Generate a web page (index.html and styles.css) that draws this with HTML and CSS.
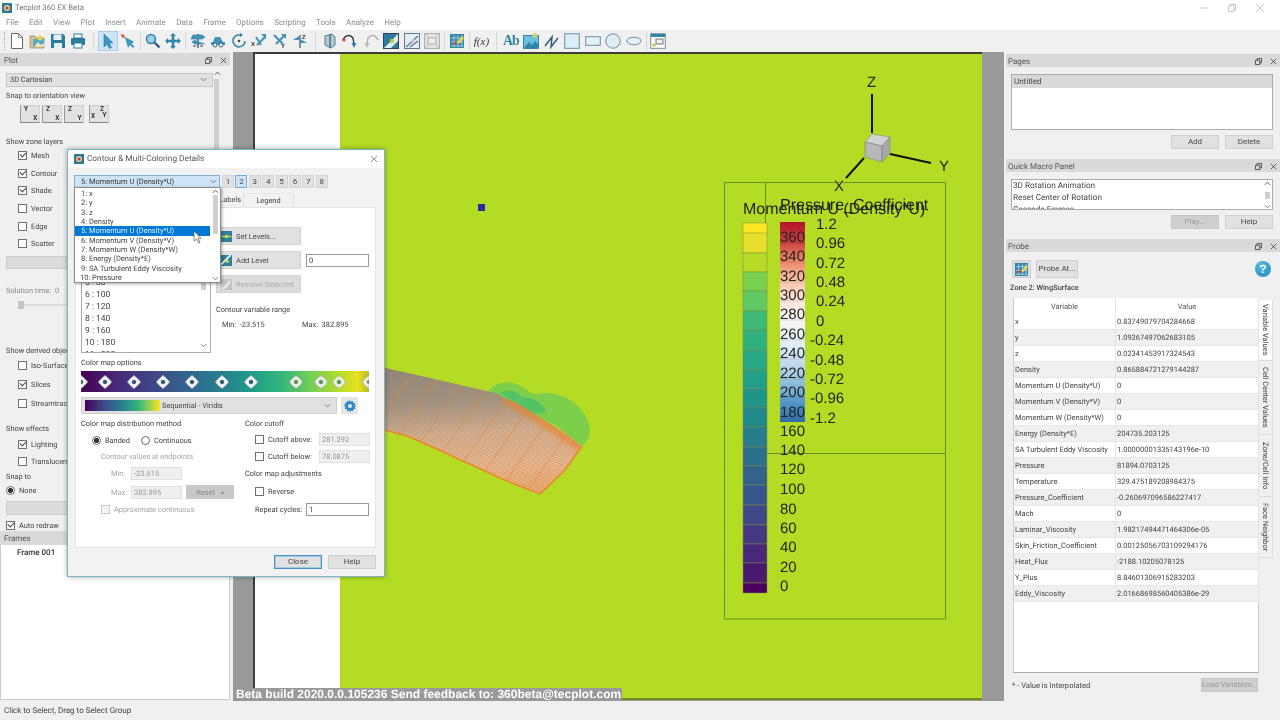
FILE: index.html
```html
<!DOCTYPE html>
<html lang="en">
<head>
<meta charset="utf-8">
<title>Tecplot 360 EX Beta</title>
<link rel="stylesheet" href="styles.css">
</head>
<body>
<svg class="defs" width="0" height="0" aria-hidden="true">
  <defs>
    <symbol id="i-probe" viewBox="0 0 16 16">
      <rect x="1" y="1" width="14" height="14" fill="#2f86a8"/>
      <path d="M2 5h12M2 9h12M2 13h12M5 2v12M9 2v12M13 2v12" stroke="#cfe6ef" stroke-width=".7"/>
      <path d="M8 9 13 3l2 2-5 6z" fill="#e6d257"/>
      <circle cx="6" cy="10" r="1.6" fill="#d8402f"/>
    </symbol>
    <symbol id="i-rot" viewBox="0 0 16 16">
      <path d="M8 1v14" stroke="#35607a" stroke-width="1.4"/>
      <path d="M1 6h11l3-2-3-2H3zM15 11H5L2 9l3-2" fill="#3f93b5" stroke="#2a7393" stroke-width=".6"/>
      <path d="M3 13h3M10 13h3" stroke="#444" stroke-width="1.2"/>
    </symbol>
    <symbol id="i-gear" viewBox="0 0 16 16">
      <path d="M8 1l1.2 2 2.2-.8.3 2.3 2.3.3-.8 2.2 2 1-2 1.2.8 2.2-2.3.3-.3 2.3-2.2-.8L8 15l-1.2-2-2.2.8-.3-2.3-2.3-.3.8-2.2-2-1.2 2-1-.8-2.2 2.3-.3.3-2.3 2.2.8z" fill="#2f86c4"/>
      <circle cx="8" cy="8" r="2.4" fill="#d7e8f4"/>
    </symbol>
  </defs>
</svg>

<div class="app">
  <header class="titlebar">
    <svg class="app-icon" viewBox="0 0 10 10"><rect width="10" height="10" fill="#2d7a95"/><circle cx="5" cy="5" r="3" fill="#e8c79a"/><circle cx="5" cy="5" r="1.5" fill="#c8402c"/></svg>
    <span class="title-text">Tecplot 360 EX Beta</span>
    <div class="winctl">
      <svg viewBox="0 0 10 10"><path d="M1 5h8"/></svg>
      <svg viewBox="0 0 10 10"><path d="M1.5 3h5.5v5.500H1.500zM3 3V1.500h5.500V7H7"/></svg>
      <svg viewBox="0 0 10 10"><path d="M1 1l8 8M9 1l-8 8"/></svg>
    </div>
  </header>
  <nav class="menubar">
    <span>File</span><span>Edit</span><span>View</span><span>Plot</span><span>Insert</span><span>Animate</span><span>Data</span><span>Frame</span><span>Options</span><span>Scripting</span><span>Tools</span><span>Analyze</span><span>Help</span>
  </nav>

  <div class="toolbar">
    <i class="grip"></i>
    <button class="tb"><svg viewBox="0 0 16 16"><path d="M2.500.5h7l4 4v11h-11z" fill="#fff" stroke="#666"/><path d="M9.500.5v4h4" fill="none" stroke="#888"/></svg></button>
    <button class="tb"><svg viewBox="0 0 16 16"><path d="M1 3h5l1 2h8v10H1z" fill="#d9c08c" stroke="#8a7a55" stroke-width=".6"/><rect x="4" y="6" width="11" height="8" fill="#5aa9c4"/><circle cx="11" cy="5" r="2.500" fill="#e6d257"/><path d="M5 14l4-5 3 3 3-2v4z" fill="#e8e0c0"/></svg></button>
    <button class="tb"><svg viewBox="0 0 16 16"><path d="M1 1h12l2 2v12H1z" fill="#2b7b9c"/><rect x="3.500" y="1.500" width="8" height="5.500" fill="#e8f2f6"/><rect x="4" y="10" width="8" height="5" fill="#e8f2f6"/></svg></button>
    <button class="tb"><svg viewBox="0 0 16 16"><rect x="4" y="1" width="8" height="4" fill="#fff" stroke="#2b7b9c"/><rect x="1" y="5" width="14" height="7" rx="1" fill="#2b7b9c"/><rect x="4" y="10" width="8" height="5" fill="#fff" stroke="#2b7b9c"/></svg></button>
    <i class="sep wide"></i>
    <button class="tb active"><svg viewBox="0 0 16 16"><path d="M4 1v13l3-3 2.500 4.500 2-1L9 10h4z" fill="#3a97bf" stroke="#2a7393" stroke-width=".6"/></svg></button>
    <button class="tb"><svg viewBox="0 0 16 16"><path d="M5 4l3 11 2-3 3 3 1.500-1.500-3-3 3-1.500z" fill="#3a97bf"/><path d="M1 1l5 5" stroke="#b56" stroke-width="1"/><circle cx="3" cy="3" r="1.500" fill="#d8402f"/></svg></button>
    <i class="sep"></i>
    <button class="tb"><svg viewBox="0 0 16 16"><circle cx="6" cy="6" r="4.500" fill="#9ad0e8" stroke="#2f7fa8" stroke-width="1.500"/><path d="M9.500 9.500l5 5" stroke="#2a5f80" stroke-width="2.400"/></svg></button>
    <button class="tb"><svg viewBox="0 0 16 16"><path d="M8 0l3 3H9.300v3.700H13V5l3 3-3 3V9.300H9.300V13H11l-3 3-3-3h1.700V9.300H3V11L0 8l3-3v1.700h3.700V3H5z" fill="#2f86a8"/></svg></button>
    <i class="sep"></i>
    <button class="tb"><svg><use href="#i-rot"/></svg></button>
    <button class="tb"><svg viewBox="0 0 16 16"><path d="M5 4h5l3 5h2v3H1V9h2z" fill="#3f93b5"/><circle cx="5" cy="12" r="2" fill="#fff" stroke="#35607a"/><circle cx="11" cy="12" r="2" fill="#fff" stroke="#35607a"/></svg></button>
    <button class="tb"><svg viewBox="0 0 16 16"><path d="M14 8A6 6 0 1 1 9 2" fill="none" stroke="#2f7fa8" stroke-width="1.500"/><path d="M9 0l3 2-3 2z" fill="#2f7fa8"/><circle cx="8" cy="8" r="1.300" fill="#444"/></svg></button>
    <button class="tb"><svg viewBox="0 0 16 16"><path d="M6 12l8-8M5 4l5 8" stroke="#3f93b5" stroke-width="2"/><path d="M10 1h5v5z" fill="#3f93b5"/><text class="ic-t" x="0" y="13">X</text></svg></button>
    <button class="tb"><svg viewBox="0 0 16 16"><path d="M2 2l9 9M12 3l-8 8" stroke="#3f93b5" stroke-width="2"/><path d="M9 1h5v5z" fill="#3f93b5"/><text class="ic-t" x="9" y="15">Y</text></svg></button>
    <button class="tb"><svg viewBox="0 0 16 16"><path d="M8 2v13" stroke="#35607a" stroke-width="1.300"/><path d="M1 7h6V3zM15 10H8V6z" fill="#3f93b5"/><text class="ic-t" x="10" y="6">Z</text></svg></button>
    <i class="sep wide"></i>
    <button class="tb"><svg viewBox="0 0 16 16"><path d="M3 3l7-2 3 3v8l-4 3-6-3z" fill="#b9c6cc" stroke="#4b7f96"/><path d="M8 1v14" stroke="#2f6f8c" stroke-width="1.400"/></svg></button>
    <button class="tb"><svg viewBox="0 0 16 16"><path d="M1 7c2-5 7-6 10-2l1 6" fill="none" stroke="#333" stroke-width="1.400"/><path d="M9.500 10h5L12 15z" fill="#2f7fa8"/><circle cx="2" cy="7" r="1.600" fill="#d8402f"/></svg></button>
    <button class="tb dim"><svg viewBox="0 0 16 16"><path d="M15 7c-2-5-7-6-10-2L4 11" fill="none" stroke="#999" stroke-width="1.400"/><path d="M1.500 10h5L4 15z" fill="#aaa"/></svg></button>
    <button class="tb"><svg viewBox="0 0 16 16"><rect x=".5" y=".5" width="15" height="15" fill="#2b7b9c" stroke="#345"/><path d="M1 15L15 1v7L8 15z" fill="#dfeef4"/><circle cx="9" cy="8" r="2.200" fill="#c9c94a"/></svg></button>
    <button class="tb"><svg viewBox="0 0 16 16"><rect x=".5" y=".5" width="15" height="15" fill="#dfeef4" stroke="#678"/><path d="M2 14L14 3M6 14l8-6" stroke="#678" stroke-width="1.300"/><circle cx="9" cy="8" r="1.800" fill="#ccc"/></svg></button>
    <button class="tb dim"><svg viewBox="0 0 16 16"><rect x=".5" y=".5" width="15" height="15" fill="#ddd" stroke="#999"/><path d="M1 1l14 14M15 1L1 15" stroke="#aaa"/><rect x="4" y="5" width="8" height="6" fill="#eee" stroke="#999"/></svg></button>
    <i class="sep"></i>
    <button class="tb"><svg><use href="#i-probe"/></svg></button>
    <i class="sep"></i>
    <button class="tb fx"><span>f(x)</span></button>
    <i class="sep wide"></i>
    <button class="tb ab"><span>Ab</span></button>
    <button class="tb"><svg viewBox="0 0 16 16"><rect x=".5" y="2.500" width="15" height="13" fill="#6cc0de" stroke="#2f86a8"/><path d="M1 15l5-6 3 3 3-4 3 3v4z" fill="#2f86a8"/><circle cx="12" cy="2.500" r="2.200" fill="#d6cf62"/></svg></button>
    <button class="tb"><svg viewBox="0 0 16 16"><path d="M1 13l7-9-1 10 7-9" fill="none" stroke="#2b5f7d" stroke-width="1.500"/></svg></button>
    <button class="tb"><svg viewBox="0 0 16 16"><rect x=".7" y=".7" width="14.600" height="14.600" fill="#dcedf5" stroke="#6a8fa0"/></svg></button>
    <button class="tb"><svg viewBox="0 0 16 16"><rect x=".7" y="3.700" width="14.600" height="8.600" fill="#e3f0f6" stroke="#6a8fa0"/></svg></button>
    <button class="tb"><svg viewBox="0 0 16 16"><circle cx="8" cy="8" r="7.200" fill="#dcedf5" stroke="#6a8fa0"/></svg></button>
    <button class="tb"><svg viewBox="0 0 16 16"><ellipse cx="8" cy="8" rx="7.200" ry="3.800" fill="#e3f0f6" stroke="#6a8fa0"/></svg></button>
    <i class="sep"></i>
    <button class="tb"><svg viewBox="0 0 16 16"><rect x=".7" y=".7" width="14.600" height="14.600" fill="#fff" stroke="#6a8fa0"/><rect x="1" y="1" width="14" height="3" fill="#2f86a8"/><rect x="6" y="6" width="7" height="5" fill="#eee" stroke="#777"/><circle cx="4" cy="12" r="1.800" fill="#c9c94a"/></svg></button>
  </div>

  <main class="main">
    <aside class="left">
      <div class="plot-panel">
        <div class="phead"><span>Plot</span><span class="pctl"><svg viewBox="0 0 8 8"><path d="M.5 2.500h5v5h-5zM2.500 2.500v-2h5v5h-2"/></svg><svg viewBox="0 0 8 8"><path d="M1 1l6 6M7 1L1 7"/></svg></span></div>
        <div class="plot-body">
          <div class="plot-content">
            <div class="combo-gray"><span>3D Cartesian</span><svg class="chev" viewBox="0 0 8 5"><path d="M1 1l3 3 3-3"/></svg></div>
            <div class="lab snap-lab">Snap to orientation view</div>
            <div class="snap-row">
              <button class="snap"><b class="tl">Y</b><b class="br">X</b></button>
              <button class="snap"><b class="tl">Z</b><b class="br">X</b></button>
              <button class="snap"><b class="tl">Z</b><b class="br">Y</b></button>
              <button class="snap iso"><b class="tl">Z</b><b class="ml">X</b><b class="mr">Y</b></button>
            </div>
            <div class="lab sec-a">Show zone layers</div>
            <div class="chk r176"><i class="cb on"></i>Mesh</div>
            <div class="chk r176"><i class="cb on"></i>Contour</div>
            <div class="chk r176"><i class="cb on"></i>Shade</div>
            <div class="chk r176"><i class="cb"></i>Vector</div>
            <div class="chk r176"><i class="cb"></i>Edge</div>
            <div class="chk r176"><i class="cb"></i>Scatter</div>
            <div class="graybar mt3"></div>
            <div class="lab sec-b">Solution time:&nbsp; 0</div>
            <div class="slider"><i></i></div>
            <div class="lab sec-c">Show derived objects</div>
            <div class="chk r19"><i class="cb"></i>Iso-Surfaces</div>
            <div class="chk r19"><i class="cb on"></i>Slices</div>
            <div class="chk r19"><i class="cb"></i>Streamtraces</div>
            <div class="lab sec-d">Show effects</div>
            <div class="chk r17"><i class="cb on"></i>Lighting</div>
            <div class="chk r17"><i class="cb"></i>Translucency</div>
            <div class="lab sec-e">Snap to</div>
            <div class="chk none"><i class="rb on"></i>None</div>
            <div class="graybar mt3 h14"></div>
            <div class="chk auto"><i class="cb on"></i>Auto redraw</div>
          </div>
          <div class="vscroll"><svg class="chev up" viewBox="0 0 8 5"><path d="M1 4l3-3 3 3"/></svg><i></i></div>
        </div>
      </div>
      <div class="phead frames-head"><span>Frames</span></div>
      <div class="frames"><b>Frame 001</b></div>
    </aside>

    <section class="view">
      <div class="canvas">
        <div class="page-white"></div>
        <div class="page-green"></div>
        <svg class="plot" viewBox="233 52 771 649" width="771" height="649">
          <defs>
            <linearGradient id="wingfill" x1="0.3" y1="0" x2="0.42" y2="1">
              <stop offset="0" stop-color="#76898f"/><stop offset=".28" stop-color="#8f9a9a"/><stop offset=".52" stop-color="#c9b9aa"/><stop offset=".8" stop-color="#e2c2a6"/><stop offset="1" stop-color="#e6b383"/>
            </linearGradient>
            <linearGradient id="pres" x1="0" y1="0" x2="0" y2="1">
              <stop offset="0" stop-color="#b2142d"/><stop offset=".1" stop-color="#c8443f"/><stop offset=".2" stop-color="#ee8a68"/><stop offset=".3" stop-color="#f8c5ae"/><stop offset=".4" stop-color="#fde4da"/><stop offset=".5" stop-color="#f6f6f6"/><stop offset=".62" stop-color="#e0ebf3"/><stop offset=".72" stop-color="#bcd8ea"/><stop offset=".82" stop-color="#86b8da"/><stop offset=".92" stop-color="#4a8fc4"/><stop offset="1" stop-color="#3268a5"/>
            </linearGradient>
            <pattern id="mesh" width="3" height="2.200" patternUnits="userSpaceOnUse" patternTransform="rotate(22)">
              <rect width="3" height=".8" fill="#e07f2e" fill-opacity=".7"/>
            </pattern>
            <pattern id="ribs" width="23" height="8" patternUnits="userSpaceOnUse" patternTransform="rotate(35)">
              <rect width="1" height="8" fill="#e8822e" fill-opacity=".55"/>
            </pattern>
            <clipPath id="wingclip"><path d="M385 368 430 378 495 393 520 405 560 430 582 446 565 470 540 494 500 478 450 455 410 437 385 430Z"/></clipPath>
          </defs>

          <path class="blob1" d="M487 393 C492 384 505 380 516 384 C525 387 530 394 535 394 C555 390 575 398 585 415 C592 427 592 438 582 446 L555 425 L495 396Z"/>
          <path class="blob2" d="M500 393 C508 388 516 391 522 397 C532 397 544 403 546 412 L535 414Z"/>
          <path class="wing" d="M385 368 430 378 495 393 520 405 560 430 582 446 565 470 540 494 500 478 450 455 410 437 385 430Z"/>
          <g clip-path="url(#wingclip)">
            <rect x="380" y="360" width="210" height="140" fill="url(#mesh)"/>
            <rect x="380" y="360" width="210" height="140" fill="url(#ribs)"/>
            <path class="wing-tip" d="M505 398 545 423 582 448"/>
          </g>
          <path class="wing-edge" d="M385 430 410 437 450 455 500 478 540 494 565 470 582 446"/>

          <rect class="blue-pt" x="478" y="204" width="7" height="7"/>

          <path class="axis" d="M872 94V133M890 154 931 163M864 158 846 178"/>
          <path class="cube-t" d="M865 142 872 134 890 137 882 146Z"/>
          <path class="cube-l" d="M865 142 882 146 882 162 865 157Z"/>
          <path class="cube-r" d="M882 146 890 137 890 153 882 162Z"/>
          <text class="axl" x="867" y="87">Z</text>
          <text class="axl" x="939" y="171">Y</text>
          <text class="axl" x="834" y="191">X</text>

          <path class="frame" d="M724.500 182.500H945.500V619H724.500ZM765.500 182.500V225M767 453.500H945.500"/>

          <rect class="b b0" x="743" y="223" width="24" height="11"/>
          <rect class="b b1" x="743" y="233" width="24" height="20"/>
          <rect class="b b2" x="743" y="253" width="24" height="19"/>
          <rect class="b b3" x="743" y="272" width="24" height="19"/>
          <rect class="b b4" x="743" y="291" width="24" height="20"/>
          <rect class="b b5" x="743" y="311" width="24" height="19"/>
          <rect class="b b6" x="743" y="330" width="24" height="20"/>
          <rect class="b b7" x="743" y="350" width="24" height="20"/>
          <rect class="b b8" x="743" y="370" width="24" height="19"/>
          <rect class="b b9" x="743" y="389" width="24" height="19"/>
          <rect class="b b10" x="743" y="408" width="24" height="19"/>
          <rect class="b b11" x="743" y="427" width="24" height="20"/>
          <rect class="b b12" x="743" y="447" width="24" height="19"/>
          <rect class="b b13" x="743" y="466" width="24" height="19"/>
          <rect class="b b14" x="743" y="485" width="24" height="20"/>
          <rect class="b b15" x="743" y="505" width="24" height="20"/>
          <rect class="b b16" x="743" y="525" width="24" height="19"/>
          <rect class="b b17" x="743" y="544" width="24" height="19"/>
          <rect class="b b18" x="743" y="563" width="24" height="20"/>
          <rect class="b b19" x="743" y="583" width="24" height="10"/>
          <rect class="pbar" x="780" y="222" width="25" height="200"/>
          <path class="pticks" d="M780 243H805M780 262H805M780 282H805M780 301H805M780 320H805M780 340H805M780 359H805M780 379H805M780 398H805"/>

          <text class="lg" x="780" y="210">Pressure_Coefficient</text>
          <text class="lg" x="743" y="214">Momentum U (Density*U)</text>
          <g class="lv">
            <text x="780" y="242">360</text><text x="780" y="261">340</text><text x="780" y="281">320</text><text x="780" y="300">300</text><text x="780" y="319">280</text><text x="780" y="339">260</text><text x="780" y="358">240</text><text x="780" y="378">220</text><text x="780" y="397">200</text><text x="780" y="417">180</text><text x="780" y="436">160</text><text x="780" y="455">140</text><text x="780" y="474">120</text><text x="780" y="494">100</text><text x="780" y="514">80</text><text x="780" y="533">60</text><text x="780" y="552">40</text><text x="780" y="572">20</text><text x="780" y="591">0</text>
            <text x="816" y="229">1.2</text><text x="816" y="248">0.96</text><text x="816" y="268">0.72</text><text x="816" y="287">0.48</text><text x="816" y="306">0.24</text><text x="816" y="326">0</text><text x="810" y="345">-0.24</text><text x="810" y="365">-0.48</text><text x="810" y="384">-0.72</text><text x="810" y="403">-0.96</text><text x="810" y="423">-1.2</text>
          </g>
        </svg>
        <div class="beta">Beta build 2020.0.0.105236 Send feedback to: 360beta@tecplot.com</div>
      </div>
    </section>

    <aside class="right">
      <div class="phead"><span>Pages</span><span class="pctl"><svg viewBox="0 0 8 8"><path d="M.5 2.500h5v5h-5zM2.500 2.500v-2h5v5h-2"/></svg><svg viewBox="0 0 8 8"><path d="M1 1l6 6M7 1L1 7"/></svg></span></div>
      <div class="rbody">
        <div class="pages-list"><div class="sel-row">Untitled</div></div>
        <div class="btn-row"><button class="btn">Add</button><button class="btn">Delete</button></div>
      </div>
      <div class="phead mt-head"><span>Quick Macro Panel</span><span class="pctl"><svg viewBox="0 0 8 8"><path d="M.5 2.500h5v5h-5zM2.500 2.500v-2h5v5h-2"/></svg><svg viewBox="0 0 8 8"><path d="M1 1l6 6M7 1L1 7"/></svg></span></div>
      <div class="rbody">
        <div class="macro-list">
          <div>3D Rotation Animation</div><div>Reset Center of Rotation</div><div>Cascade Frames</div>
          <div class="macro-scroll"><svg class="chev up" viewBox="0 0 8 5"><path d="M1 4l3-3 3 3"/></svg><i></i><svg class="chev" viewBox="0 0 8 5"><path d="M1 1l3 3 3-3"/></svg></div>
        </div>
        <div class="btn-row"><button class="btn off">Play...</button><button class="btn">Help</button></div>
      </div>
      <div class="phead mt-head2"><span>Probe</span><span class="pctl"><svg viewBox="0 0 8 8"><path d="M.5 2.500h5v5h-5zM2.500 2.500v-2h5v5h-2"/></svg><svg viewBox="0 0 8 8"><path d="M1 1l6 6M7 1L1 7"/></svg></span></div>
      <div class="rbody">
        <div class="probe-tools">
          <button class="ibtn"><svg><use href="#i-probe"/></svg></button>
          <button class="btn probe-at">Probe At...</button>
          <span class="help-q">?</span>
        </div>
        <div class="zone">Zone 2: WingSurface</div>
        <div class="probe-area">
          <div class="table-wrap">
            <table class="ptable">
              <thead><tr><th>Variable</th><th>Value</th></tr></thead>
              <tbody>
                <tr><td>x</td><td>0.83749079704284668</td></tr>
                <tr><td>y</td><td>1.09267497062683105</td></tr>
                <tr><td>z</td><td>0.02341453917324543</td></tr>
                <tr><td>Density</td><td>0.865884721279144287</td></tr>
                <tr><td>Momentum U (Density*U)</td><td>0</td></tr>
                <tr><td>Momentum V (Density*V)</td><td>0</td></tr>
                <tr><td>Momentum W (Density*W)</td><td>0</td></tr>
                <tr><td>Energy (Density*E)</td><td>204735.203125</td></tr>
                <tr><td>SA Turbulent Eddy Viscosity</td><td>1.00000001335143196e-10</td></tr>
                <tr><td>Pressure</td><td>81894.0703125</td></tr>
                <tr><td>Temperature</td><td>329.475189208984375</td></tr>
                <tr><td>Pressure_Coefficient</td><td>-0.260697096586227417</td></tr>
                <tr><td>Mach</td><td>0</td></tr>
                <tr><td>Laminar_Viscosity</td><td>1.98217494471464306e-05</td></tr>
                <tr><td>Skin_Friction_Coefficient</td><td>0.00125056703109294176</td></tr>
                <tr><td>Heat_Flux</td><td>-2188.10205078125</td></tr>
                <tr><td>Y_Plus</td><td>8.84601306915283203</td></tr>
                <tr><td>Eddy_Viscosity</td><td>2.01668698560405386e-29</td></tr>
              </tbody>
            </table>
          </div>
          <div class="side-tabs">
            <div class="stab cur t1">Variable Values</div>
            <div class="stab t2">Cell Center Values</div>
            <div class="stab t3">Zone/Cell Info</div>
            <div class="stab t4">Face Neighbor</div>
          </div>
        </div>
        <div class="probe-foot"><span>* - Value is Interpolated</span><button class="btn off load">Load Variables...</button></div>
      </div>
    </aside>
  </main>

  <footer class="status">Click to Select, Drag to Select Group</footer>

  <div class="dialog">
    <div class="dtitle">
      <svg class="app-icon" viewBox="0 0 10 10"><rect width="10" height="10" fill="#2d7a95"/><circle cx="5" cy="5" r="3" fill="#e8c79a"/><circle cx="5" cy="5" r="1.500" fill="#c8402c"/></svg>
      <span>Contour &amp; Multi-Coloring Details</span>
      <svg class="dclose" viewBox="0 0 10 10"><path d="M1 1l8 8M9 1l-8 8"/></svg>
    </div>
    <div class="dtop">
      <div class="var-combo"><span>5: Momentum U (Density*U)</span><svg class="chev" viewBox="0 0 8 5"><path d="M1 1l3 3 3-3"/></svg></div>
      <div class="nums">
        <button class="num">1</button><button class="num cur">2</button><button class="num">3</button><button class="num">4</button><button class="num">5</button><button class="num">6</button><button class="num">7</button><button class="num">8</button>
      </div>
    </div>
    <div class="dtabs"><span class="dtab">Labels</span><span class="dtab">Legend</span></div>
    <div class="pane">
      <div class="ptop">
        <div class="levels">
          <div>5 : 80</div><div>6 : 100</div><div>7 : 120</div><div>8 : 140</div><div>9 : 160</div><div>10 : 180</div><div>11 : 200</div>
          <div class="lscroll"><i></i><svg class="chev" viewBox="0 0 8 5"><path d="M1 1l3 3 3-3"/></svg></div>
        </div>
        <div class="level-side">
          <div class="lvl-row"><button class="lvlbtn"><svg viewBox="0 0 16 16"><rect width="16" height="16" fill="#2f7fa0"/><path d="M1 8h14" stroke="#c9d94a" stroke-width="2"/><circle cx="8" cy="8" r="2.500" fill="#c9d94a"/></svg>Set Levels...</button></div>
          <div class="lvl-row"><button class="lvlbtn"><svg viewBox="0 0 16 16"><rect width="16" height="16" fill="#2f7fa0"/><path d="M0 14L14 0" stroke="#dfeef4" stroke-width="3"/><circle cx="9" cy="9" r="2.500" fill="#c9d94a"/></svg>Add Level</button><span class="inp addinp">0</span></div>
          <div class="lvl-row"><button class="lvlbtn off"><svg viewBox="0 0 16 16"><rect width="16" height="16" fill="#c4c4c4"/><path d="M2 14c4-1 7-5 11-11" stroke="#eee" stroke-width="3" fill="none"/></svg>Remove Selected</button></div>
          <div class="lab cvr">Contour variable range</div>
          <div class="minmax"><span>Min:&nbsp; -23.515</span><span>Max:&nbsp; 382.895</span></div>
        </div>
      </div>
      <div class="lab cmo">Color map options</div>
      <div class="cmap">
        <i class="dm" style="left:-5px"></i>
        <i class="dm" style="left:19px"></i>
        <i class="dm" style="left:48px"></i>
        <i class="dm" style="left:77px"></i>
        <i class="dm" style="left:106px"></i>
        <i class="dm" style="left:136px"></i>
        <i class="dm" style="left:165px"></i>
        <i class="dm lt" style="left:210px"></i>
        <i class="dm lt" style="left:235px"></i>
        <i class="dm lt" style="left:253px"></i>
        <i class="dm lt" style="left:283px"></i>
      </div>
      <div class="cmap-sel">
        <div class="cm-combo"><i class="swatch"></i><span>Sequential - Viridis</span><svg class="chev" viewBox="0 0 8 5"><path d="M1 1l3 3 3-3"/></svg></div>
        <button class="gearbtn"><svg><use href="#i-gear"/></svg></button>
      </div>
      <div class="opts">
        <div class="opt-l">
          <div class="lab">Color map distribution method</div>
          <div class="radios"><span class="radio"><i class="rb on"></i>Banded</span><span class="radio"><i class="rb"></i>Continuous</span></div>
          <div class="lab dis endp">Contour values at endpoints</div>
          <div class="mm mm1"><span class="dis">Min:</span><span class="inp off w51">-23.515</span></div>
          <div class="mm mm2"><span class="dis">Max:</span><span class="inp off w51">382.895</span><button class="reset">Reset<em>&#9662;</em></button></div>
          <div class="approx dis"><i class="cb off"></i>Approximate continuous</div>
        </div>
        <div class="opt-r">
          <div class="lab">Color cutoff</div>
          <div class="cut c1"><i class="cb"></i><span>Cutoff above:</span><span class="inp off w51">281.292</span></div>
          <div class="cut c2"><i class="cb"></i><span>Cutoff below:</span><span class="inp off w51">78.0875</span></div>
          <div class="lab adj">Color map adjustments</div>
          <div class="cut c3"><i class="cb"></i><span>Reverse</span></div>
          <div class="repeat"><span>Repeat cycles:</span><span class="inp rep">1</span></div>
        </div>
      </div>
    </div>
    <div class="dfoot"><button class="btn def">Close</button><button class="btn">Help</button></div>

    <div class="dropdown">
      <div>1: x</div><div>2: y</div><div>3: z</div><div>4: Density</div>
      <div class="hi">5: Momentum U (Density*U)</div>
      <div>6: Momentum V (Density*V)</div><div>7: Momentum W (Density*W)</div><div>8: Energy (Density*E)</div><div>9: SA Turbulent Eddy Viscosity</div><div class="ten">10: Pressure</div>
      <div class="dscroll"><svg class="chev up" viewBox="0 0 8 5"><path d="M1 4l3-3 3 3"/></svg><i></i><svg class="chev" viewBox="0 0 8 5"><path d="M1 1l3 3 3-3"/></svg></div>
    </div>
    <svg class="cursor" viewBox="0 0 10 14"><path d="M1 1v10l2.500-2 2 4 1.500-.7-2-4H8z" fill="#fff" stroke="#555" stroke-width=".7"/></svg>
  </div>
</div>
</body>
</html>
```
FILE: styles.css
```css
* { box-sizing: border-box; }
html, body { margin: 0; padding: 0; }
body { width: 1280px; height: 720px; overflow: hidden; background: #f0f0f0; }
button { font: inherit; color: inherit; margin: 0; padding: 0; }
.defs { position: absolute; }

.app {
  position: relative; width: 1280px; height: 720px; display: flex; flex-direction: column;
  font-family: Roboto, "Liberation Sans", sans-serif; font-size: 7.400px; color: #444;
  background: #f0f0f0; filter: blur(.3px); text-rendering: geometricPrecision;
}

/* Title + menu */
.titlebar { height: 15px; background: #fff; display: flex; align-items: center; padding-left: 2px; position: relative; }
.app-icon { width: 10px; height: 10px; flex: none; }
.title-text { margin-left: 3px; color: #777; font-size: 7.700px; }
.winctl { margin-left: auto; display: flex; gap: 18px; padding-right: 15px; }
.winctl svg { width: 10px; height: 10px; fill: none; stroke: #bbb; stroke-width: .8; }
.menubar { height: 15px; background: #fff; display: flex; align-items: center; color: #8d8d8d; font-size: 8px; padding-left: 6px; gap: 10.400px; }
.menubar span { flex: none; }

/* Toolbar */
.toolbar { height: 22px; background: #f0f0f0; display: flex; align-items: center; padding-left: 4px; }
.grip { width: 1px; height: 18px; border-left: 1px dotted #aaa; margin-right: 1.700px; flex: none; }
.tb { width: 20.500px; height: 20px; flex: none; border: 0; background: none; display: flex; align-items: center; justify-content: center; }
.tb svg { width: 16px; height: 16px; }
.tb.active { background: #cde4f7; box-shadow: inset 0 0 0 1px #a9cfe9; }
.tb.dim { opacity: .75; }
.sep { width: 1px; height: 18px; background: #d6d6d6; margin: 0 1.500px; flex: none; }
.sep.wide { margin: 0 4px; }
.ic-t { font: bold 6px "Liberation Sans", sans-serif; fill: #333; }
.fx span { font: italic 11px "Liberation Serif", serif; color: #333; }
.ab span { font: bold 14px "Liberation Serif", serif; color: #2f86a8; letter-spacing: -1px; }

/* Main */
.main { height: 651px; display: flex; flex: none; }
.left { width: 233px; flex: none; display: flex; flex-direction: column; padding-top: 1px; }
.plot-panel { height: 477px; flex: none; overflow: hidden; }
.phead { height: 13px; background: #d9d9d9; display: flex; align-items: center; justify-content: space-between; padding: 1px 3px 0 4px; color: #555; font-size: 8px; flex: none; }
.left .phead { width: 230px; }
.pctl { display: flex; gap: 8px; }
.pctl svg { width: 7px; height: 7px; fill: none; stroke: #333; stroke-width: .9; }
.plot-body { display: flex; width: 230px; }
.plot-content { width: 214px; padding-left: 6px; flex: none; }
.lab { height: 12px; line-height: 12px; white-space: nowrap; }
.combo-gray { margin-top: 7px; width: 207px; height: 14px; background: #e1e1e1; border: 1px solid #c8c8c8; display: flex; align-items: center; justify-content: space-between; padding: 0 5px 1px 3px; }
.chev { width: 7px; height: 5px; fill: none; stroke: #666; stroke-width: 1; flex: none; display: block; }
.snap-lab { margin-top: 3px; }
.snap-row { margin-top: 3px; margin-left: 14px; display: flex; gap: 2.500px; height: 18px; }
.snap { width: 19.500px; height: 18px; background: #e1e1e1; border: 1px solid #cfcfcf; border-bottom-color: #888; border-left-color: #999; position: relative; }
.snap.iso { margin-left: 3px; }
.snap b { position: absolute; font-size: 6.500px; color: #333; line-height: 7px; }
.snap .tl { left: 3px; top: 0; }
.snap .br { right: 1px; bottom: 0; }
.snap .ml { left: 1px; bottom: 2px; }
.snap .mr { right: 1px; bottom: 3px; }
.snap.iso .tl { left: 10px; }
.sec-a { margin-top: 13px; margin-bottom: -1px; }
.chk { display: flex; align-items: center; white-space: nowrap; padding-left: 12px; }
.cb { width: 9px; height: 9px; border: 1px solid #707070; background: #fff; margin-right: 4px; flex: none; position: relative; display: block; }
.cb.on::after { content: ""; position: absolute; left: 1px; top: 0; width: 5px; height: 3px; border-left: 1px solid #444; border-bottom: 1px solid #444; transform: rotate(-45deg); }
.cb.off { border-color: #ccc; background: #f4f4f4; }
.rb { width: 9px; height: 9px; border: 1px solid #666; border-radius: 50%; background: #fff; display: block; flex: none; margin-right: 4px; }
.rb.on { background: radial-gradient(circle, #333 0 2.300px, #fff 2.800px); }
.r176 { height: 17.600px; }
.r19 { height: 19px; }
.r17 { height: 17px; }
.graybar { height: 13px; background: #dcdcdc; border: 1px solid #ccc; width: 210px; }
.mt3 { margin-top: 3px; }
.h14 { height: 14px; }
.sec-b { margin-top: 16px; color: #888; }
.slider { margin-top: 4px; height: 8px; margin-left: 12px; width: 190px; background: linear-gradient(#0000 3px, #ddd 3px, #ddd 5px, #0000 5px); }
.slider i { display: block; width: 6px; height: 8px; background: #c4c4c4; }
.sec-c { margin-top: 36px; margin-bottom: -1px; }
.sec-d { margin-top: 10px; margin-bottom: 1px; }
.sec-e { margin-top: 1.500px; margin-bottom: -1px; }
.none { height: 16px; padding-left: 0; }
.auto { height: 16px; margin-top: 2px; padding-left: 0; }
.vscroll { padding-top: 5px; width: 7px; }
.vscroll i { display: block; margin-top: 3px; width: 5px; height: 420px; background: #cfcfcf; }
.chev.up { stroke: #444; }
.frames-head { margin-top: 1px; height: 14px; }
.frames { width: 230px; height: 155px; background: #fff; border: 1px solid #ccc; border-top: 0; padding: 2px 0 0 16px; }
.frames b { font-weight: 500; color: #333; font-size: 8px; line-height: 12px; }

/* Viewport */
.view { width: 771px; height: 649px; flex: none; background: #9a9a9a; }
.canvas { position: relative; width: 771px; height: 649px; }
.page-white { position: absolute; left: 20px; top: 0; width: 87px; height: 648px; background: #fff; border: solid #3c3c3c; border-width: 2px 0 0 2px; }
.page-green { position: absolute; left: 107px; top: 0; width: 642px; height: 648px; background: #b5dc24; border-top: 2px solid #3c3c3c; border-bottom: 2px solid #6d8a1c; }
.plot { position: absolute; left: 0; top: 0; }
.blob1 { fill: #7ccf4a; }
.blob2 { fill: #52c263; }
.wing { fill: url(#wingfill); }
.wing-tip { fill: none; stroke: #e8842a; stroke-width: 9; stroke-opacity: .7; filter: blur(2.500px); }
.wing-edge { fill: none; stroke: #ea862c; stroke-width: 1.600; }
.blue-pt { fill: #2b2ba8; }
.axis { stroke: #111; stroke-width: 2; fill: none; }
.cube-t { fill: #d2d2d2; stroke: #777; stroke-width: .5; }
.cube-l { fill: #b8b8b8; stroke: #777; stroke-width: .5; }
.cube-r { fill: #a8a8a8; stroke: #777; stroke-width: .5; }
.axl { font: 15px "Liberation Sans", sans-serif; fill: #222; }
.frame { fill: none; stroke: #6f8a2a; stroke-width: 1; }
.b { stroke: #7d8b45; stroke-width: .5; }
.b0 { fill: #fde725; } .b1 { fill: #e6df2b; } .b2 { fill: #b6dc27; } .b3 { fill: #79d150; } .b4 { fill: #5fc964; }
.b5 { fill: #3dba76; } .b6 { fill: #2fb27e; } .b7 { fill: #28a984; } .b8 { fill: #21a087; } .b9 { fill: #1f958a; }
.b10 { fill: #20898c; } .b11 { fill: #277c8d; } .b12 { fill: #2d708e; } .b13 { fill: #33638d; } .b14 { fill: #39568c; }
.b15 { fill: #414789; } .b16 { fill: #453781; } .b17 { fill: #48287a; } .b18 { fill: #4a1a70; } .b19 { fill: #4b0060; }
.pbar { fill: url(#pres); }
.pticks { stroke: #000; stroke-opacity: .12; stroke-width: 1; }
.lg { font: 16px "Liberation Sans", sans-serif; fill: #222; }
.lv text { font: 15px "Liberation Sans", sans-serif; fill: #222; }
.beta { position: absolute; left: 1px; top: 636px; height: 13px; width: 388px; background: #999; color: #fff; font: bold 12px/13px "Liberation Sans", sans-serif; padding-left: 2px; white-space: nowrap; }

/* Right */
.right { width: 276px; flex: none; padding-top: 2px; }
.right .phead { margin-left: 2px; padding-left: 2px; padding-right: 3px; }
.rbody { padding: 0 7px; font-size: 8px; }
.pages-list { margin-top: 7px; height: 56px; background: #fff; border: 1px solid #aaa; }
.sel-row { height: 13px; line-height: 13px; background: #d9d9d9; padding-left: 2px; }
.btn-row { margin-top: 5px; display: flex; justify-content: flex-end; gap: 6px; height: 14px; }
.btn { width: 48px; height: 14px; background: #e1e1e1; border: 1px solid #cfcfcf; flex: none; text-align: center; line-height: 12px; font-size: 8px; }
.btn.off { background: #cfcfcf; color: #999; border-color: #c8c8c8; }
.right .mt-head { margin-top: 10px; }
.macro-list { margin-top: 7px; height: 31px; background: #fff; border: 1px solid #aaa; overflow: hidden; line-height: 12px; padding-left: 1px; font-size: 8.200px; position: relative; }
.macro-scroll { position: absolute; right: 1px; top: 1px; width: 8px; height: 28px; display: flex; flex-direction: column; align-items: center; justify-content: space-between; background: #fff; }
.macro-scroll i { display: block; width: 5px; height: 7px; background: #cfcfcf; }
.right .mt-head2 { margin-top: 10px; }
.probe-tools { margin-top: 8px; height: 18px; display: flex; align-items: center; padding-left: 1px; }
.ibtn { width: 19px; height: 18px; background: #e1e1e1; border: 1px solid #cfcfcf; display: flex; align-items: center; justify-content: center; }
.ibtn svg { width: 15px; height: 15px; }
.probe-at { width: 42px; height: 18px; margin-left: 5px; }
.help-q { margin-left: auto; margin-right: 2px; width: 16px; height: 16px; border-radius: 50%; background: radial-gradient(circle at 40% 30%, #55bde0, #1f86b8); color: #fff; font: bold 12px/16px "Liberation Sans", sans-serif; text-align: center; }
.zone { margin-top: 4px; height: 12px; line-height: 12px; margin-left: -1px; color: #444; font-weight: 500; font-size: 7.400px; }
.probe-area { margin-top: 4px; display: flex; height: 375px; padding-left: 2px; }
.table-wrap { width: 246px; height: 375px; background: #fff; border: 1px solid #ccc; border-top: 0; border-bottom-color: #aaa; flex: none; }
.ptable { width: 245px; border-collapse: separate; border-spacing: 0; table-layout: fixed; font-size: 7.500px; }
.ptable th { font-weight: 400; height: 16px; text-align: center; border-right: 1px solid #e4e4e4; padding: 0; color: #555; }
.ptable th:first-child, .ptable td:first-child { width: 102px; }
.ptable td { height: 16px; padding: 0 0 0 1px; white-space: nowrap; overflow: hidden; border-right: 1px solid #e4e4e4; border-bottom: 1px solid #e6e6e6; }
.ptable tbody tr:nth-child(even) td { background: #f0f0f0; }
.side-tabs { width: 14px; flex: none; display: flex; flex-direction: column; padding-top: 2px; }
.stab { writing-mode: vertical-rl; width: 14px; text-align: center; font-size: 7.500px; line-height: 14px; white-space: nowrap; border: solid #ddd; border-width: 0 1px 1px 0; }
.stab.cur { background: #fff; }
.t1 { height: 61px; } .t2 { height: 74px; } .t3 { height: 62px; } .t4 { height: 61px; }
.probe-foot { margin-top: 5px; padding-left: 1px; padding-right: 15px; display: flex; align-items: center; justify-content: space-between; height: 14px; font-size: 7.600px; }
.load { width: 57px; font-size: 7.500px; white-space: nowrap; overflow: hidden; }

.status { height: 17px; background: #f0f0f0; padding-left: 4px; line-height: 15px; color: #444; flex: none; font-size: 8px; }

/* Dialog */
.dialog { position: absolute; left: 67px; top: 149px; width: 318px; height: 428px; background: #f2f2f2; border: 1px solid #7fb4c6; box-shadow: 0 0 5px rgba(0,0,0,.35); }
.dtitle { height: 18px; background: #fff; display: flex; align-items: center; padding-left: 6px; font-size: 8.250px; color: #555; }
.dtitle span { margin-left: 3px; }
.dclose { width: 8px; height: 8px; margin-left: auto; margin-right: 6px; fill: none; stroke: #666; stroke-width: .9; }
.dtop { margin-top: 7px; padding-left: 6px; display: flex; align-items: center; height: 13px; }
.var-combo { width: 146px; height: 13px; background: #cde4f7; border: 1px solid #7eb4dc; display: flex; align-items: center; justify-content: space-between; padding: 0 2px 0 6px; flex: none; color: #333; font-size: 7.500px; }
.nums { display: flex; gap: 1.400px; margin-left: 2px; }
.num { width: 12px; height: 13px; background: #e1e1e1; border: 1px solid #d4d4d4; font-size: 8px; line-height: 11px; text-align: center; }
.num.cur { background: #cde4f7; border-color: #6fb0dc; }
.dtabs { margin-top: 5px; height: 14px; padding-left: 146px; display: flex; }
.dtab { display: block; line-height: 14px; }
.dtab:first-child { width: 30px; text-align: right; padding-right: 2px; border-right: 1px solid #e0e0e0; }
.dtab:last-child { width: 50px; text-align: center; border-right: 1px solid #e0e0e0; border-top: 1px solid #e8e8e8; }
.pane { margin-left: 7px; width: 301px; height: 341px; background: #fff; border: 1px solid #e4e4e4; padding: 6px 6px 0 5px; }
.ptop { display: flex; gap: 5px; height: 139px; }
.levels { width: 130px; height: 139px; border: 1px solid #aaa; background: #fff; padding: 62px 0 0 3px; overflow: hidden; font-size: 8.500px; line-height: 12px; position: relative; flex: none; }
.lscroll { position: absolute; right: 4px; top: 61px; width: 5px; height: 72px; display: flex; flex-direction: column; align-items: center; justify-content: space-between; }
.lscroll i { display: block; width: 5px; height: 14px; background: #cfcfcf; }
.level-side { padding-top: 13px; flex: 1; }
.lvl-row { display: flex; align-items: center; height: 18px; margin-bottom: 6px; }
.lvlbtn { width: 85px; height: 18px; background: #e1e1e1; border: 1px solid #d4d4d4; display: flex; align-items: center; padding-left: 4px; white-space: nowrap; font-size: 7.500px; flex: none; }
.lvlbtn svg { width: 11px; height: 11px; margin-right: 4px; flex: none; }
.lvlbtn.off { color: #aaa; background: #dcdcdc; }
.inp { display: block; height: 13px; border: 1px solid #999; background: #fff; line-height: 11px; padding-left: 2px; font-size: 7.500px; flex: none; }
.addinp { width: 63px; margin-left: 5px; }
.inp.off { background: #efefef; border-color: #e0e0e0; color: #999; }
.w51 { width: 51px; }
.cvr { margin-top: 11px; }
.minmax { margin-top: 3px; padding-left: 6px; display: flex; line-height: 12px; }
.minmax span:first-child { width: 80px; }
.cmo { margin-top: 4px; }
.cmap { margin-top: 2px; height: 21px; width: 288px; background: linear-gradient(90deg, #440154, #482878 12%, #3e4989 26%, #31688e 38%, #26828e 50%, #1f9e89 60%, #35b779 70%, #6ece58 79%, #b5de2b 90%, #e8e020 96%, #b5bc2b); position: relative; overflow: hidden; }
.dm { position: absolute; top: 5.500px; width: 10px; height: 10px; background: radial-gradient(circle, #2f5a70 0 1.800px, #ddd 2.300px, #fff 4px, #b8b8b8 7px); transform: rotate(45deg); box-shadow: 0 0 1px #666; display: block; }
.dm.lt { background: radial-gradient(circle, #5f9a4a 0 1.800px, #ddd 2.300px, #f4f4f4 4px, #b0b0b0 7px); }
.cmap-sel { margin-top: 5px; display: flex; gap: 4px; height: 17px; }
.cm-combo { width: 256px; height: 17px; background: #e1e1e1; border: 1px solid #cfcfcf; display: flex; align-items: center; padding: 0 5px 0 3px; }
.swatch { display: block; width: 75px; height: 11px; background: linear-gradient(90deg, #440154, #3e4989 25%, #26828e 50%, #35b779 72%, #fde725); margin-right: 2px; flex: none; }
.cm-combo span { flex: 1; }
.gearbtn { width: 17px; height: 17px; background: #e4e4e4; border: 0; display: flex; align-items: center; justify-content: center; }
.gearbtn svg { width: 14px; height: 14px; }
.opts { margin-top: 4px; display: flex; }
.opt-l { width: 164px; flex: none; position: relative; }
.opt-r { flex: 1; }
.radios { margin-top: 3px; height: 14px; padding-left: 11px; display: flex; align-items: center; }
.radio { display: flex; align-items: center; }
.radio:first-child { width: 49px; }
.dis { color: #a5a5a5; }
.endp { margin-top: 4px; padding-left: 20px; }
.mm { display: flex; align-items: center; height: 16px; padding-left: 30px; }
.mm > span:first-child { width: 20px; }
.mm1 { margin-top: 2px; }
.mm2 { margin-top: 3px; }
.reset { width: 48px; height: 14px; margin-left: 4px; background: #c8c8c8; border: 0; color: #888; display: flex; justify-content: center; align-items: center; gap: 6px; }
.reset em { font-style: normal; font-size: 6px; }
.approx { margin-top: 3px; padding-left: 20px; height: 12px; display: flex; align-items: center; }
.cut { display: flex; align-items: center; padding-left: 10px; height: 13px; }
.cut > span:nth-of-type(1) { width: 51px; white-space: nowrap; }
.c1 { margin-top: 3px; }
.c2 { margin-top: 4px; }
.adj { margin-top: 5px; }
.c3 { margin-top: 5px; }
.repeat { margin-top: 5px; padding-left: 10px; display: flex; align-items: center; height: 13px; }
.repeat span:first-child { width: 51px; white-space: nowrap; }
.rep { width: 63px; }
.dfoot { padding: 7px 8px 0 0; display: flex; justify-content: flex-end; gap: 6px; }
.btn.def { border-color: #4a90c2; box-shadow: inset 0 0 0 1px #9fcbe8; }

.dropdown { position: absolute; left: 6px; top: 37px; width: 147px; height: 96px; background: #fff; border: 1px solid #8a8a8a; box-shadow: 1px 1px 3px rgba(0,0,0,.35); z-index: 3; padding-top: 1px; }
.dropdown > div:not(.dscroll) { height: 9.330px; line-height: 9.330px; padding-left: 6px; white-space: nowrap; font-size: 7.500px; color: #444; }
.dropdown .hi { background: #0078d7; color: #d8ecfb !important; width: 135px; }
.dropdown .ten { padding-left: 5px !important; }
.dscroll { position: absolute; right: 1px; top: 1px; width: 8px; height: 92px; display: flex; flex-direction: column; align-items: center; gap: 1px; }
.dscroll i { display: block; width: 5px; height: 39px; background: #cfcfcf; margin-bottom: auto; }
.cursor { position: absolute; left: 125px; top: 80px; width: 10px; height: 14px; z-index: 4; }
```
